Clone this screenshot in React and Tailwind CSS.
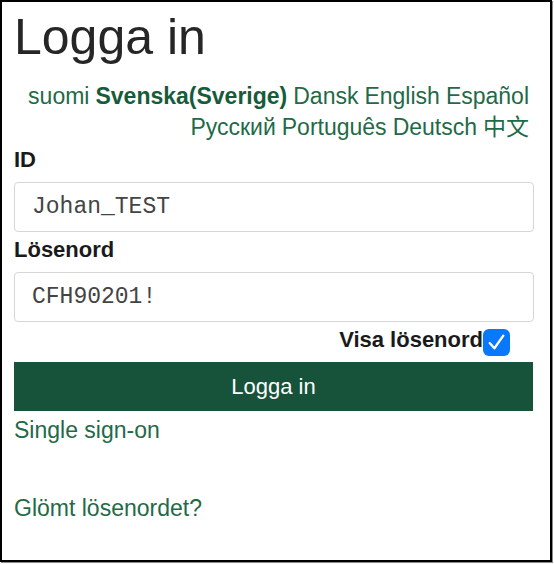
import React from "react";

const LANGS_TOP = [
  { label: "suomi" },
  { label: "Svenska(Sverige)", active: true },
  { label: "Dansk" },
  { label: "English" },
  { label: "Español" },
];
const LANGS_BOTTOM = ["Русский", "Português", "Deutsch", "中文"];

function CheckBox() {
  return (
    <span className="mt-[1px] flex h-[27px] w-[27px] shrink-0 items-center justify-center rounded-[6px] bg-[#0a78fb]">
      <svg width="21" height="21" viewBox="0 0 20 20" fill="none" aria-hidden>
        <path
          d="M3.5 10.5 L8 15.5 L16.5 3.5"
          stroke="#fff"
          strokeWidth="2.2"
          strokeLinecap="round"
          strokeLinejoin="round"
        />
      </svg>
    </span>
  );
}

export default function App() {
  return (
    <div className="h-[564px] w-[554px] bg-white font-['Liberation_Sans','Noto_Sans_CJK_SC',sans-serif]">
      <div className="h-[562px] w-[552px] border-2 border-black pl-[12px] pt-[10px] shadow-[1px_1px_0_#8a8a8a]">
        <div className="w-[520px]">
          <h1 className="text-[50px] leading-[50px] text-[#262626]">Logga in</h1>

          {/* språkval */}
          <div className="mt-[19px] pr-[5px] text-right text-[23px] leading-[31px] text-[#1f6a47]">
            <div className="flex justify-end gap-[6px] whitespace-nowrap">
              {LANGS_TOP.map((l) => (
                <span
                  key={l.label}
                  className={l.active ? "font-bold text-[#175b3b]" : ""}
                >
                  {l.label}
                </span>
              ))}
            </div>
            <div className="flex justify-end gap-[6px] whitespace-nowrap">
              {LANGS_BOTTOM.map((l) => (
                <span key={l}>{l}</span>
              ))}
            </div>
          </div>

          <label className="mt-[5px] block text-[22px] font-bold leading-[24px] text-[#1a1a1a]">
            ID
          </label>
          <div className="mt-[10px] flex h-[50px] items-center rounded-[4px] border border-[#d6d6d6] bg-white pl-[17px] font-['Liberation_Mono',monospace] text-[23px] text-[#444]">
            Johan_TEST
          </div>

          <label className="mt-[6px] block text-[22px] font-bold leading-[24px] text-[#1a1a1a]">
            Lösenord
          </label>
          <div className="mt-[10px] flex h-[50px] items-center rounded-[4px] border border-[#d6d6d6] bg-white pl-[17px] font-['Liberation_Mono',monospace] text-[23px] text-[#444]">
            CFH90201!
          </div>

          <div className="mt-[6px] flex h-[28px] items-start justify-end pr-[24px]">
            <span className="whitespace-nowrap text-[22px] font-bold leading-[24px] text-[#1a1a1a]">
              Visa lösenord
            </span>
            <CheckBox />
          </div>

          <button
            type="button"
            className="mt-[6px] flex h-[49px] w-[519px] items-center justify-center bg-[#17533b] text-[22px] text-white"
          >
            Logga in
          </button>

          <div className="mt-[6px] text-[23px] leading-[26px] text-[#1f6a47]">
            Single sign-on
          </div>
          <div className="mt-[52px] text-[23px] leading-[26px] text-[#1f6a47]">
            Glömt lösenordet?
          </div>
        </div>
      </div>
    </div>
  );
}
